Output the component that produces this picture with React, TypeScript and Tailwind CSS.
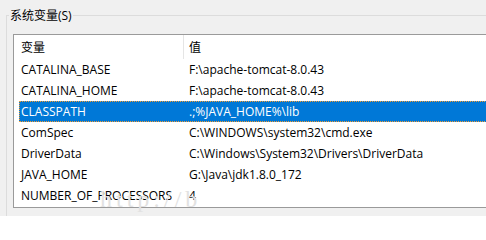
const rows: [string, string][] = [
  ['CATALINA_BASE', 'F:\\apache-tomcat-8.0.43'],
  ['CATALINA_HOME', 'F:\\apache-tomcat-8.0.43'],
  ['CLASSPATH', '.;%JAVA_HOME%\\lib'],
  ['ComSpec', 'C:\\WINDOWS\\system32\\cmd.exe'],
  ['DriverData', 'C:\\Windows\\System32\\Drivers\\DriverData'],
  ['JAVA_HOME', 'G:\\Java\\jdk1.8.0_172'],
  ['NUMBER_OF_PROCESSORS', '4'],
]

const selected = 'CLASSPATH'

export default function App() {
  return (
    <div className="relative h-[216px] w-[486px] overflow-hidden bg-[#f0f0f0] pt-[15px] pl-[6px] font-['Open_Sans','Noto_Sans_CJK_SC',sans-serif] text-[12px] text-black">
      <div className="h-[240px] w-[560px] border-t border-l border-[#dcdcdc]">
        <div className="-mt-[8px] ml-[2px] h-[16px] w-fit bg-[#f0f0f0] px-[1px] leading-[16px]">系统变量(S)</div>

        <div className="mt-[10px] ml-[6px] h-[174px] w-[560px] border-t border-b border-l border-[#9a9a9a] bg-white">
          <div className="flex h-[24px] items-center">
            <div className="w-[169px] pl-[7px] pt-[1px]">变量</div>
            <div className="h-[24px] w-px bg-[#e5e5e5]" />
            <div className="pl-[5px] pt-[1px]">值</div>
          </div>

          {rows.map(([name, value]) => {
            const isSel = name === selected
            return (
              <div
                key={name}
                className={
                  isSel
                    ? 'ml-[5px] flex h-[21px] items-center bg-[#0078d7] pt-[1px] text-white outline-1 -outline-offset-1 outline-dotted outline-[#f39c32]'
                    : 'ml-[5px] flex h-[21px] items-center pt-[1px]'
                }
              >
                <div className="w-[164px] whitespace-nowrap pl-[2px]">{name}</div>
                <div className="whitespace-nowrap pl-[6px]">{value}</div>
              </div>
            )
          })}
        </div>
      </div>

      {/* faint watermark over the list */}
      <div className="pointer-events-none absolute top-[181px] left-[100px] font-['Liberation_Serif',serif] text-[24px] tracking-[4px] text-[#e2e2e2]">
        http://b
      </div>
    </div>
  )
}
